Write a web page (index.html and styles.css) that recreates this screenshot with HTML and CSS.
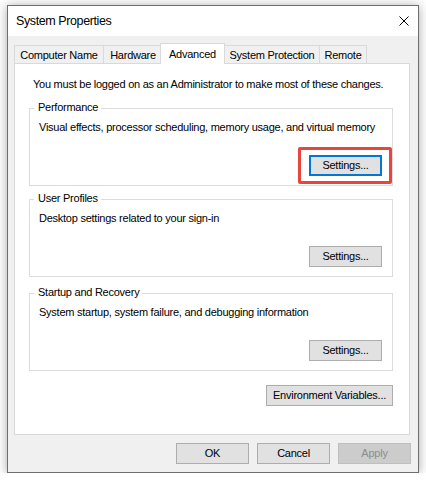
FILE: index.html
```html
<!DOCTYPE html>
<html lang="en">
<head>
<meta charset="utf-8">
<title>System Properties</title>
<link rel="stylesheet" href="styles.css">
</head>
<body>
<div class="page">
  <div class="window">
    <div class="titlebar">
      <span class="title">System Properties</span>
      <span class="close" aria-label="Close">
        <svg width="10" height="10" viewBox="0 0 10 10"><path d="M0.5 0.5L9.5 9.5M9.5 0.5L0.5 9.5" stroke="#000" stroke-width="1" fill="none"/></svg>
      </span>
    </div>
    <div class="body">
      <div class="tabs">
        <div class="tab tab-cn">Computer Name</div>
        <div class="tab tab-hw">Hardware</div>
        <div class="tab tab-adv active">Advanced</div>
        <div class="tab tab-sp">System Protection</div>
        <div class="tab tab-rm">Remote</div>
      </div>
      <div class="panel">
        <p class="note">You must be logged on as an Administrator to make most of these changes.</p>
        <section class="group group-first">
          <div class="group-title">Performance</div>
          <div class="group-desc">Visual effects, processor scheduling, memory usage, and virtual memory</div>
          <div class="group-actions"><span class="highlight"><button class="btn focused">Settings...</button></span></div>
        </section>
        <section class="group group-second">
          <div class="group-title">User Profiles</div>
          <div class="group-desc">Desktop settings related to your sign-in</div>
          <div class="group-actions"><button class="btn">Settings...</button></div>
        </section>
        <section class="group group-third">
          <div class="group-title">Startup and Recovery</div>
          <div class="group-desc">System startup, system failure, and debugging information</div>
          <div class="group-actions"><button class="btn">Settings...</button></div>
        </section>
        <div class="env-row"><button class="btn btn-env">Environment Variables...</button></div>
      </div>
      <div class="footer">
        <button class="btn">OK</button>
        <button class="btn">Cancel</button>
        <button class="btn" disabled>Apply</button>
      </div>
    </div>
  </div>
</div>
</body>
</html>
```
FILE: styles.css
```css
html, body {
  margin: 0;
  background: #fff;
}
body {
  font-family: "Liberation Sans", Arial, sans-serif;
  font-size: 11px;
  letter-spacing: -0.25px;
  color: #000;
}
.page {
  padding: 5px 0 0 7px;
}
.window {
  width: 412px;
  height: 468px;
  box-sizing: border-box;
  border: 1px solid #6e6e6e;
  background: #f0f0f0;
  box-shadow: 0 1px 10px rgba(0, 0, 0, 0.35);
  display: flex;
  flex-direction: column;
}
.titlebar {
  flex: none;
  height: 30px;
  background: #fff;
  display: flex;
  align-items: center;
  justify-content: space-between;
  padding: 0 9px 0 8px;
}
.title {
  font-size: 12.5px;
  letter-spacing: -0.4px;
}
.close {
  display: flex;
}
.body {
  flex: 1;
  padding: 7px 7px 0 6px;
}
.tabs {
  display: flex;
  align-items: flex-end;
  height: 20px;
}
.tab {
  box-sizing: border-box;
  height: 18px;
  border: 1px solid #d9d9d9;
  border-bottom: 0;
  background: #f0f0f0;
  text-align: center;
  line-height: 15px;
  padding-top: 2px;
  margin-left: -1px;
  white-space: nowrap;
}
.tab:first-child {
  margin-left: 0;
}
.tab-cn { width: 90px; }
.tab-hw { width: 60px; }
.tab-adv { width: 65px; }
.tab-sp { width: 96px; }
.tab-rm { width: 48px; }
.tab.active {
  height: 21px;
  margin-left: -3px;
  margin-bottom: -1px;
  background: #fff;
  position: relative;
  z-index: 1;
  padding-top: 3px;
}
.panel {
  box-sizing: border-box;
  height: 372px;
  margin-right: 1px;
  border: 1px solid #d9d9d9;
  background: #fff;
  padding: 13px 16px 0 14px;
}
.note {
  margin: 0 0 0 4px;
  line-height: 15px;
  white-space: nowrap;
}
.group {
  border: 1px solid #dcdcdc;
  padding: 0 10px 9px 9px;
}
.group-first { margin-top: 16px; }
.group-second { margin-top: 13px; }
.group-third { margin-top: 16px; }
.group-title {
  width: fit-content;
  margin: -9px 0 0 -5px;
  padding: 0 3px 0 4px;
  background: #fff;
  line-height: 15px;
}
.group-desc {
  margin-top: 5px;
  line-height: 15px;
  white-space: nowrap;
}
.group-actions {
  display: flex;
  justify-content: flex-end;
  margin-top: 20px;
}
.env-row {
  display: flex;
  justify-content: flex-end;
  margin-top: 14px;
}
.footer {
  display: flex;
  justify-content: flex-end;
  gap: 8px;
  margin-top: 8px;
}
.btn {
  box-sizing: border-box;
  height: 21px;
  width: 73px;
  margin: 0;
  padding: 0;
  border: 1px solid #adadad;
  border-radius: 0;
  background: #e1e1e1;
  color: #000;
  font: inherit;
  letter-spacing: inherit;
  line-height: 19px;
  white-space: nowrap;
}
.btn-env {
  width: 127px;
}
.btn.focused {
  border: 2px solid #0078d7;
  line-height: 17px;
}
.btn:disabled {
  background: #cccccc;
  border-color: #bfbfbf;
  color: #8d8d8d;
}
.highlight {
  position: relative;
  display: flex;
}
.highlight::after {
  content: "";
  position: absolute;
  left: -11px;
  right: -10px;
  top: -8px;
  bottom: -8px;
  border: 3px solid #e8463c;
  border-radius: 2px;
  pointer-events: none;
}
```
